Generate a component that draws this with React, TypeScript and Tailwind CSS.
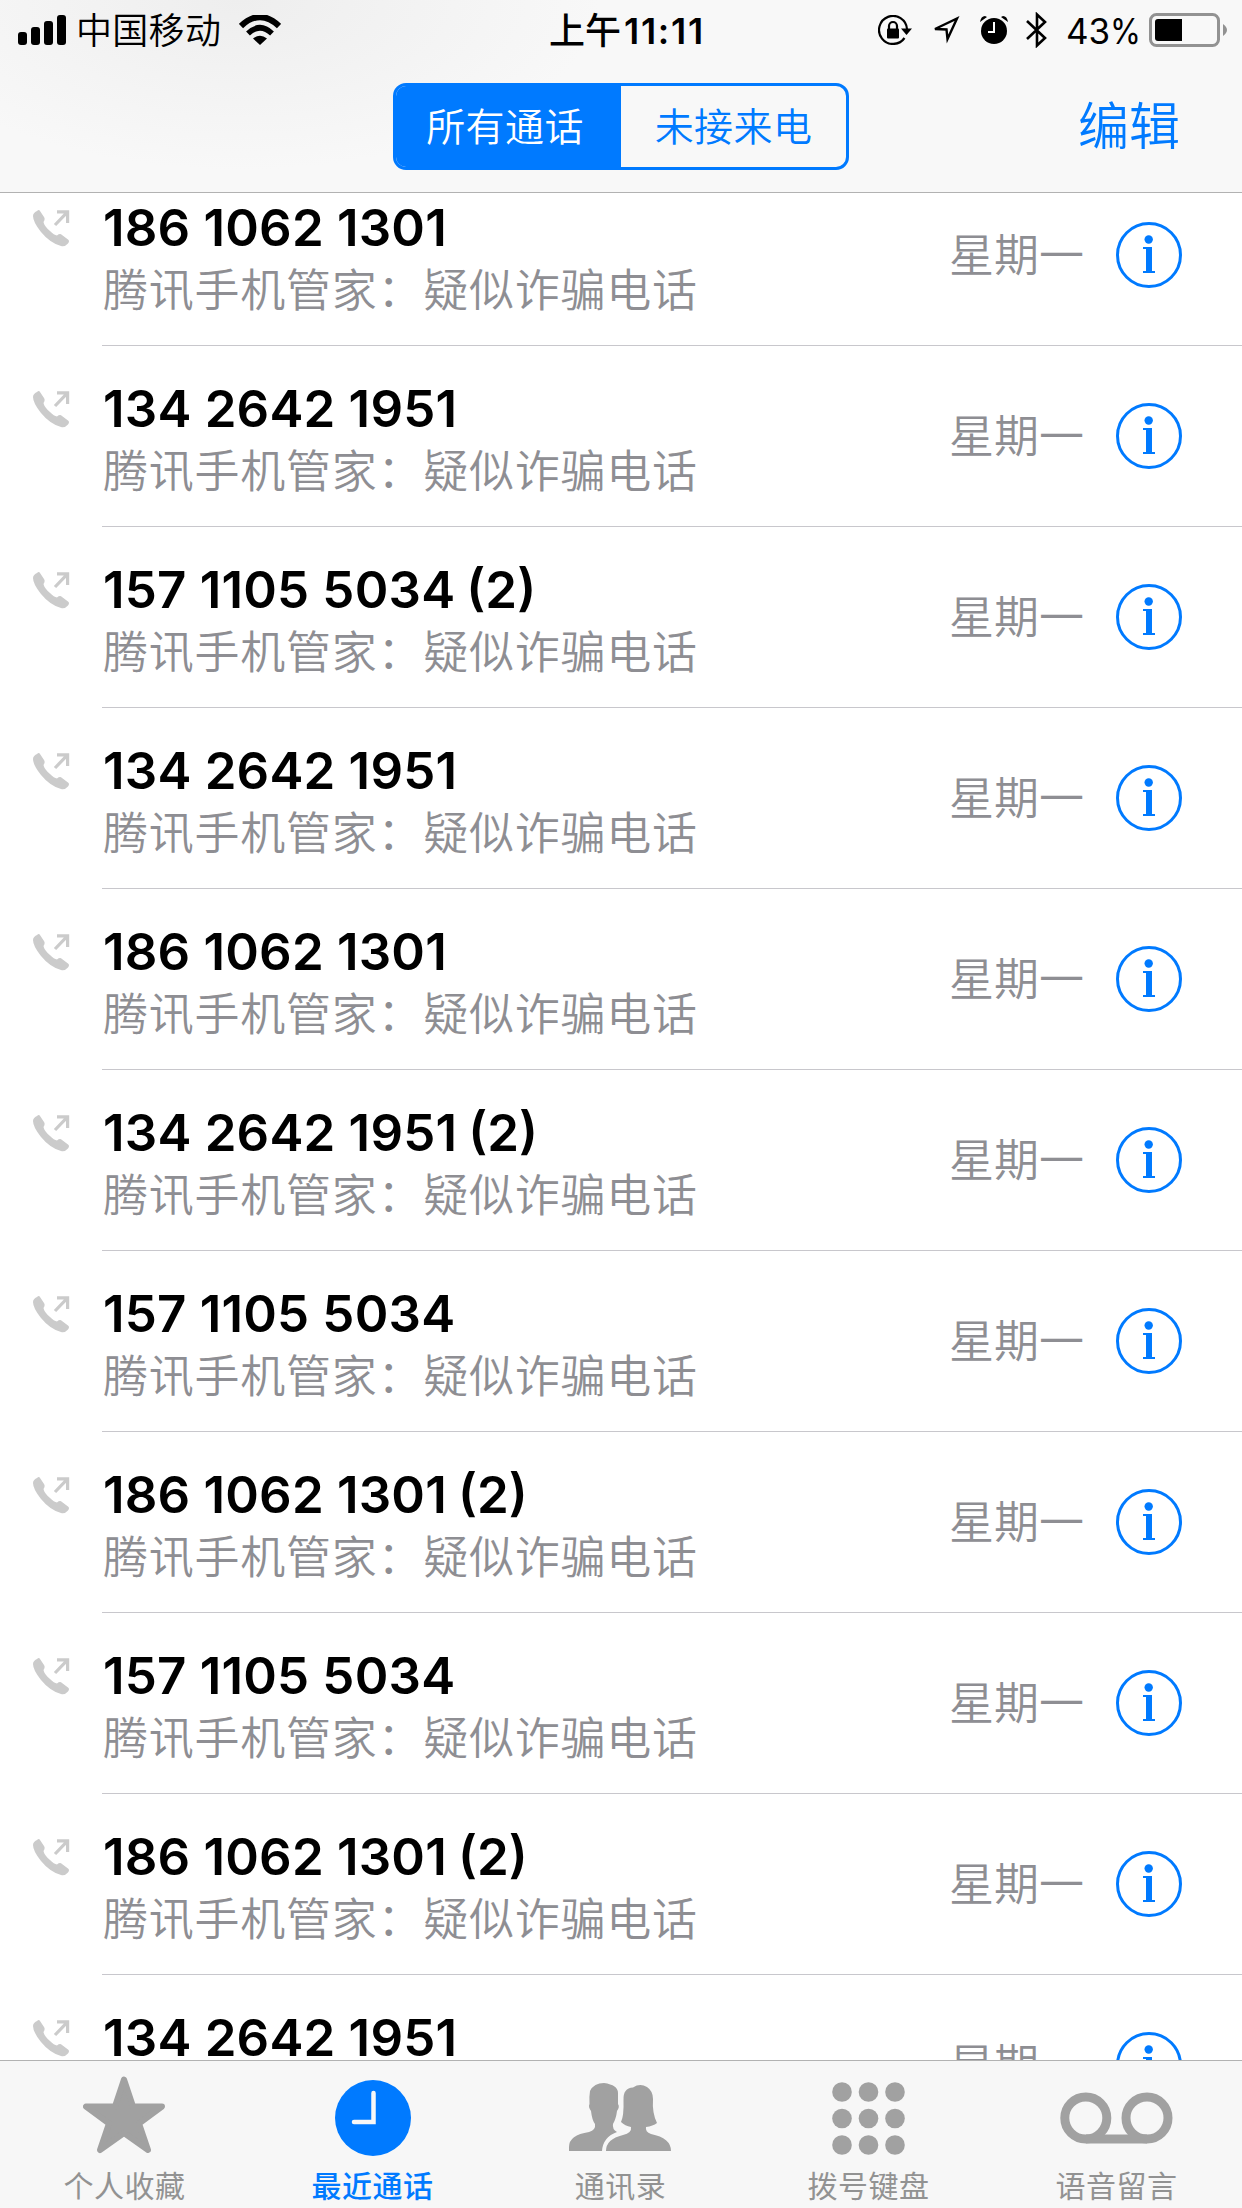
import React from 'react';

const calls = [
  { number: '186 1062 1301' },
  { number: '134 2642 1951' },
  { number: '157 1105 5034', count: 2 },
  { number: '134 2642 1951' },
  { number: '186 1062 1301' },
  { number: '134 2642 1951', count: 2 },
  { number: '157 1105 5034' },
  { number: '186 1062 1301', count: 2 },
  { number: '157 1105 5034' },
  { number: '186 1062 1301', count: 2 },
  { number: '134 2642 1951' },
];

const StatusBar: React.FC = () => {
  return (
    <div className="flex h-[60px] items-center">
      <div className="flex w-[549px] items-center pl-[18px]">
        <svg width="48" height="30" viewBox="0 0 48 30">
          <rect x="0" y="17" width="9" height="13" rx="3" />
          <rect x="13" y="12" width="9" height="18" rx="3" />
          <rect x="26" y="6" width="9" height="24" rx="3" />
          <rect x="39" y="0" width="9" height="30" rx="3" />
        </svg>
        <span className="ml-[10px] pt-[2px] text-[36px] font-[350] leading-[60px] tracking-[0.300px]">中国移动</span>
        <svg className="ml-[18px]" width="42" height="30" viewBox="0 0 42 30" fill="none" stroke="#000">
          <path d="M2 11Q21 -7 40 11" strokeWidth="6" />
          <path d="M9 18.500Q21 7 33 18.500" strokeWidth="5.500" />
          <path d="M14 23.500Q21 18 28 23.500L21 30Z" fill="#000" stroke="none" />
        </svg>
      </div>
      <div className="w-[154px] whitespace-nowrap pt-[2px] text-[36px] font-semibold leading-[60px]">
        <span className="font-medium">上午</span>
        <span className="ml-[3px] tracking-[1.700px]">11:11</span>
      </div>
      <div className="flex flex-1 items-center pl-[175px]">
        <svg width="34" height="30" viewBox="0 0 34 30">
          <path d="M26.500 23A14 14 0 1 1 29 14" fill="none" stroke="#000" strokeWidth="2.200" />
          <path d="M23 13.500H34L28.500 20Z" />
          <rect x="9" y="13.500" width="12" height="10" rx="1" />
          <path d="M11 15V11a4 4 0 0 1 8 0v4" fill="none" stroke="#000" strokeWidth="2.200" />
        </svg>
        <svg className="ml-[19px]" width="29" height="30" viewBox="0 0 29 30">
          <path d="M4 14L26 3.500L16.500 24L15.500 14.500Z" fill="none" stroke="#000" strokeWidth="2.400" />
        </svg>
        <svg className="ml-[20px]" width="28" height="30" viewBox="0 0 28 30">
          <circle cx="14" cy="16" r="13" />
          <path d="M0 7Q1 1 5 1L7 2ZM28 7Q27 1 23 1L21 2Z" />
          <path d="M14 7V17H8" fill="none" stroke="#fff" strokeWidth="2" />
        </svg>
        <svg className="ml-[18px]" width="22" height="36" viewBox="0 0 22 36">
          <path d="M1 9L19 26L11 33.500V2.500L19 10L1 27" fill="none" stroke="#000" strokeWidth="2.600" />
        </svg>
        <span className="ml-[18px] flex w-[74px] text-[35px] leading-[60px] pt-[2px]">
          43<span className="origin-left scale-x-90">%</span>
        </span>
        <svg className="ml-[9px]" width="79" height="34" viewBox="0 0 79 34">
          <rect x="1.500" y="1.500" width="68" height="31" rx="6" fill="none" stroke="#929292" strokeWidth="3" />
          <path d="M33 6v22H9a3 3 0 0 1-3-3V9a3 3 0 0 1 3-3Z" />
          <path d="M74 11Q82 17 74 23Z" fill="#929292" />
        </svg>
      </div>
    </div>
  );
};

const PhoneIcon: React.FC = () => {
  return (
    <svg className="mt-[45px] ml-[33px] shrink-0" width="37" height="37" viewBox="0 0 37 37" fill="#cbcbcb">
      <path d="M4 1Q6 -1 7 1L11 7Q12.500 9 10.500 12Q11 16 17 21Q21 25 24 25.500Q27 23 29 25L35 29.500Q37 31 35 33.500Q32 37 28 36Q17 33 8 22Q0 12 0 6Q0 3 4 1Z" />
      <path d="M24 1.800H34.600V13M34.600 1.800L22 15" fill="none" stroke="#cbcbcb" strokeWidth="3.200" />
    </svg>
  );
};

const InfoIcon: React.FC = () => {
  return (
    <svg className="mr-[60px] shrink-0" width="66" height="66" viewBox="0 0 66 66" fill="#007aff">
      <circle cx="33" cy="33" r="31.500" fill="none" stroke="#007aff" strokeWidth="3" />
      <circle cx="32.700" cy="17.500" r="4.200" />
      <rect x="27" y="25" width="9" height="2" />
      <rect x="30" y="25" width="6" height="25" />
      <rect x="27" y="49" width="12" height="2" />
    </svg>
  );
};

const CallRow: React.FC<{ number: string; count?: number }> = ({ number, count }) => {
  return (
    <div className="flex h-[181px] shrink-0">
      <div className="w-[102px] shrink-0">
        <PhoneIcon />
      </div>
      <div className="flex flex-1 items-start border-b border-[#c8c7cc]">
        <div className="flex-1 pt-[32px]">
          <div className="ml-px text-[51px] font-semibold leading-[62px] tracking-[0.200px]">
            {number}
            {count && <span className="ml-[11px] tracking-normal">({count})</span>}
          </div>
          <div className="mt-px ml-px text-[45px] font-[350] leading-[62px] tracking-[0.750px] text-[#8e8e93]">腾讯手机管家：疑似诈骗电话</div>
        </div>
        <div className="flex items-start pt-[57px]">
          <span className="mr-[32px] pt-px text-[45px] font-[350] leading-[66px] text-[#8e8e93]">星期一</span>
          <InfoIcon />
        </div>
      </div>
    </div>
  );
};

const Tab: React.FC<{ label: string; active?: boolean; children: React.ReactNode }> = ({ label, active, children }) => {
  return (
    <div className={`flex w-[248px] flex-col items-center ${active ? 'text-[#007aff]' : 'text-[#929292]'}`}>
      <div className="h-[105px]">{children}</div>
      <div className={`ml-px text-[30px] leading-[44px] tracking-[0.500px] ${active ? 'font-medium' : 'font-normal'}`}>{label}</div>
    </div>
  );
};

const App: React.FC = () => {
  return (
    <div className="flex h-[2208px] w-[1242px] flex-col overflow-hidden bg-white font-[Inter,'Noto_Sans_CJK_SC',sans-serif] text-black">
      <header className="h-[193px] shrink-0 border-b border-[#b2b2b2] bg-[#f8f8f8] bg-[radial-gradient(ellipse_360px_170px_at_240px_0px,#eeeeee,#f8f8f8)]">
        <StatusBar />
        <div className="flex items-start pt-[23px] pl-[393px]">
          <div className="flex h-[87px] w-[456px] overflow-hidden rounded-[13px] border-3 border-[#007aff] text-[39px] font-[350] leading-[81px] tracking-[0.400px]">
            <div className="w-[225px] bg-[#007aff] pr-[7px] text-center text-white">所有通话</div>
            <div className="flex-1 text-center text-[#007aff]">未接来电</div>
          </div>
          <div className="ml-[229px] text-[51px] font-[350] leading-[87px] text-[#007aff]">编辑</div>
        </div>
      </header>

      <main className="flex-1 overflow-hidden">
        <div className="-mt-[28px] flex flex-col">
          {calls.map((call, i) => (
            <CallRow key={i} number={call.number} count={call.count} />
          ))}
        </div>
      </main>

      <nav className="flex h-[148px] shrink-0 border-t border-[#b2b2b2] bg-[#f7f7f7]">
        <Tab label="个人收藏">
          <svg className="mt-[15px]" width="82" height="78" viewBox="0 0 82 78" fill="#a1a1a1" stroke="#a1a1a1" strokeWidth="6" strokeLinejoin="round">
            <path d="M41 3.500L50 30.500H79L56 47.500L65 74L41 57L17 74L26 47.500L3 30.500H32Z" />
          </svg>
        </Tab>
        <Tab label="最近通话" active>
          <svg className="mt-[19px] ml-[2px]" width="76" height="76" viewBox="0 0 76 76">
            <circle cx="38" cy="38" r="38" fill="#007aff" />
            <path d="M38.500 13V42H19" fill="none" stroke="#f7f7f7" strokeWidth="4.500" strokeLinecap="round" />
          </svg>
        </Tab>
        <Tab label="通讯录">
          <svg className="mt-[22px]" width="102" height="68" viewBox="0 0 102 68" fill="#a1a1a1">
            <path d="M21 8Q25 0 35 0Q49 2 49 10V21Q51 24 48 28Q47 36 44 41Q43 46 48 49Q34 54 33 68H0V64Q0 52 20 49Q27 47 26 41Q23 37 22 28Q19 24 20.500 21Q20 14 21 8Z" />
            <path d="M64 4.500Q71 0 78 4Q84 8 84 16Q83 30 88 40Q84 43 77 44Q76 49 82 51Q102 55 102 68H37Q37 56 54 52Q63 50 62 44Q56 43 52 39Q55 33 54.500 17Q54 5 64 4.500Z" />
          </svg>
        </Tab>
        <Tab label="拨号键盘">
          <svg className="mt-[21px]" width="73" height="73" viewBox="0 0 73 73" fill="#a1a1a1">
            {[10, 36.5, 63].map((y) => [10, 36.5, 63].map((x) => <circle key={`${x}-${y}`} cx={x} cy={y} r="9.800" />))}
          </svg>
        </Tab>
        <Tab label="语音留言">
          <svg className="mt-[31px] ml-px" width="113" height="52" viewBox="0 0 113 52" fill="none" stroke="#a1a1a1" strokeWidth="9">
            <circle cx="25.800" cy="26" r="21" />
            <circle cx="87" cy="26" r="21" />
            <path d="M26 47H87" />
          </svg>
        </Tab>
      </nav>
    </div>
  );
};

export default App;
